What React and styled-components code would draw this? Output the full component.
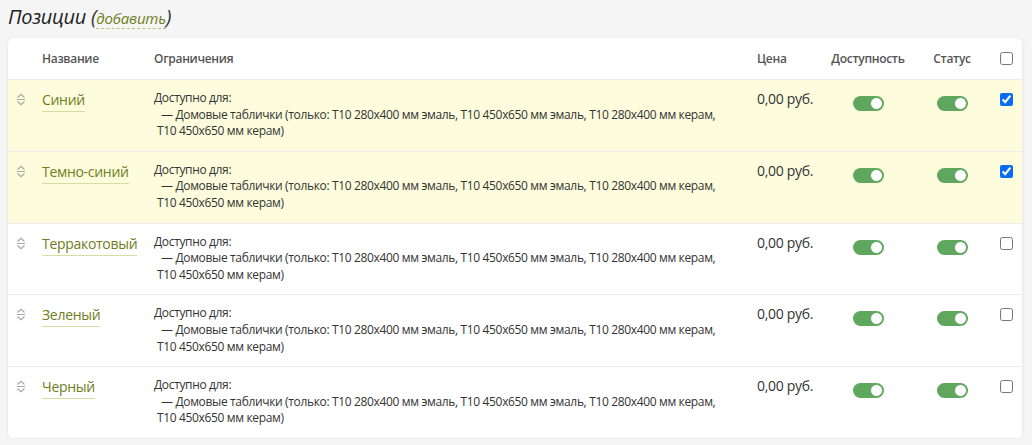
import styled, { createGlobalStyle } from 'styled-components';

const GlobalStyle = createGlobalStyle`
  html, body {
    margin: 0;
    padding: 0;
    background: #f5f5f5;
    font-family: "Open Sans", "Noto Sans", sans-serif;
    color: #333;
  }
`;

const items = [
  { name: 'Синий', selected: true },
  { name: 'Темно-синий', selected: true },
  { name: 'Терракотовый', selected: false },
  { name: 'Зеленый', selected: false },
  { name: 'Черный', selected: false },
];

const restriction =
  'Домовые таблички (только: Т10 280х400 мм эмаль, Т10 450х650 мм эмаль, Т10 280х400 мм керам, Т10 450х650 мм керам)';

const DragIcon = () => (
  <svg width="10" height="13" viewBox="0 0 10 13" fill="none" stroke="#a8a8a8" strokeWidth="1.2">
    <path d="M1.5 4.5 L5 1.2 L8.5 4.5" />
    <path d="M1 6.5 H9" />
    <path d="M1.5 8.5 L5 11.8 L8.5 8.5" />
  </svg>
);

const App = () => (
  <Page>
    <GlobalStyle />
    <Title>
      Позиции <Paren>(</Paren>
      <AddLink>добавить</AddLink>
      <Paren>)</Paren>
    </Title>
    <Card>
      <HeaderRow>
        <span />
        <HeadCell>Название</HeadCell>
        <HeadCell>Ограничения</HeadCell>
        <HeadCell>Цена</HeadCell>
        <HeadCell center>Доступность</HeadCell>
        <HeadCell center>Статус</HeadCell>
        <CheckCell>
          <Check type="checkbox" readOnly />
        </CheckCell>
      </HeaderRow>
      {items.map(item => (
        <Row key={item.name} selected={item.selected}>
          <Handle>
            <DragIcon />
          </Handle>
          <NameCell>
            <Name>{item.name}</Name>
          </NameCell>
          <Restriction>
            <div>Доступно для:</div>
            <Item>— {restriction}</Item>
          </Restriction>
          <Price>0,00 руб.</Price>
          <ToggleCell>
            <Toggle>
              <Knob />
            </Toggle>
          </ToggleCell>
          <ToggleCell>
            <Toggle>
              <Knob />
            </Toggle>
          </ToggleCell>
          <CheckCell row>
            <Check type="checkbox" checked={item.selected} readOnly />
          </CheckCell>
        </Row>
      ))}
    </Card>
  </Page>
);

export default App;

const Page = styled.div`
  padding: 3px 10px 0 8px;
`;

const Title = styled.h2`
  margin: 0 0 6px;
  font-size: 20px;
  line-height: 28px;
  font-weight: 400;
  font-style: italic;
  letter-spacing: -0.3px;
  color: #222;
`;

const Paren = styled.span`
  color: #333;
`;

const AddLink = styled.span`
  font-size: 15px;
  letter-spacing: -0.2px;
  color: #6f7d22;
  border-bottom: 1px dashed #b7c77a;
`;

const Card = styled.div`
  background: #fff;
  border-radius: 6px;
  box-shadow: 0 1px 4px rgba(0, 0, 0, 0.08);
  overflow: hidden;
`;

const columns = '26px 112px 603px 79px 80px 88px 20px 1fr';

const HeaderRow = styled.div`
  display: grid;
  grid-template-columns: ${columns};
  align-items: center;
  height: 41px;
  border-bottom: 1px solid #ececec;
`;

const HeadCell = styled.div`
  padding: ${({ center }) => (center ? '0' : '0 8px')};
  font-size: 12px;
  font-weight: 600;
  letter-spacing: -0.3px;
  color: #555;
  white-space: nowrap;
  text-align: ${({ center }) => (center ? 'center' : 'left')};
`;

const Row = styled.div`
  display: grid;
  grid-template-columns: ${columns};
  align-items: start;
  padding: 10px 0 11px;
  border-bottom: 1px solid #ececec;
  background: ${({ selected }) => (selected ? '#fdfddd' : '#fff')};
`;

const Handle = styled.div`
  display: flex;
  justify-content: center;
  padding: 3px 0 0;
`;

const NameCell = styled.div`
  padding: 0 8px;
  line-height: 18px;
`;

const Name = styled.span`
  font-size: 14px;
  letter-spacing: -0.3px;
  color: #6f7d22;
  border-bottom: 1px solid #cfe0a0;
  padding-bottom: 2px;
  white-space: nowrap;
`;

const Restriction = styled.div`
  padding: 0 8px;
  max-width: 566px;
  font-size: 12px;
  line-height: 16.6px;
  letter-spacing: -0.35px;
  color: #333;
`;

const Item = styled.div`
  padding-left: 3px;
  text-indent: 4px;
`;

const Price = styled.div`
  padding: 0 8px;
  font-size: 14px;
  line-height: 18px;
  letter-spacing: -0.3px;
  white-space: nowrap;
  color: #333;
`;

const ToggleCell = styled.div`
  display: flex;
  justify-content: center;
  padding-top: 6px;
`;

const Toggle = styled.div`
  display: flex;
  justify-content: flex-end;
  align-items: center;
  width: 31px;
  height: 15px;
  border-radius: 8px;
  background: #5fa65f;
  box-sizing: border-box;
  padding: 0 1px;
`;

const Knob = styled.div`
  width: 13px;
  height: 13px;
  border-radius: 50%;
  background: #fff;
  box-sizing: border-box;
  border: 1px solid #5fa65f;
`;

const CheckCell = styled.div`
  display: flex;
  justify-content: center;
  padding-top: ${({ row }) => (row ? '3px' : '0')};
`;

const Check = styled.input`
  margin: 0;
  width: 13px;
  height: 13px;
  accent-color: #0a6cf5;
`;
